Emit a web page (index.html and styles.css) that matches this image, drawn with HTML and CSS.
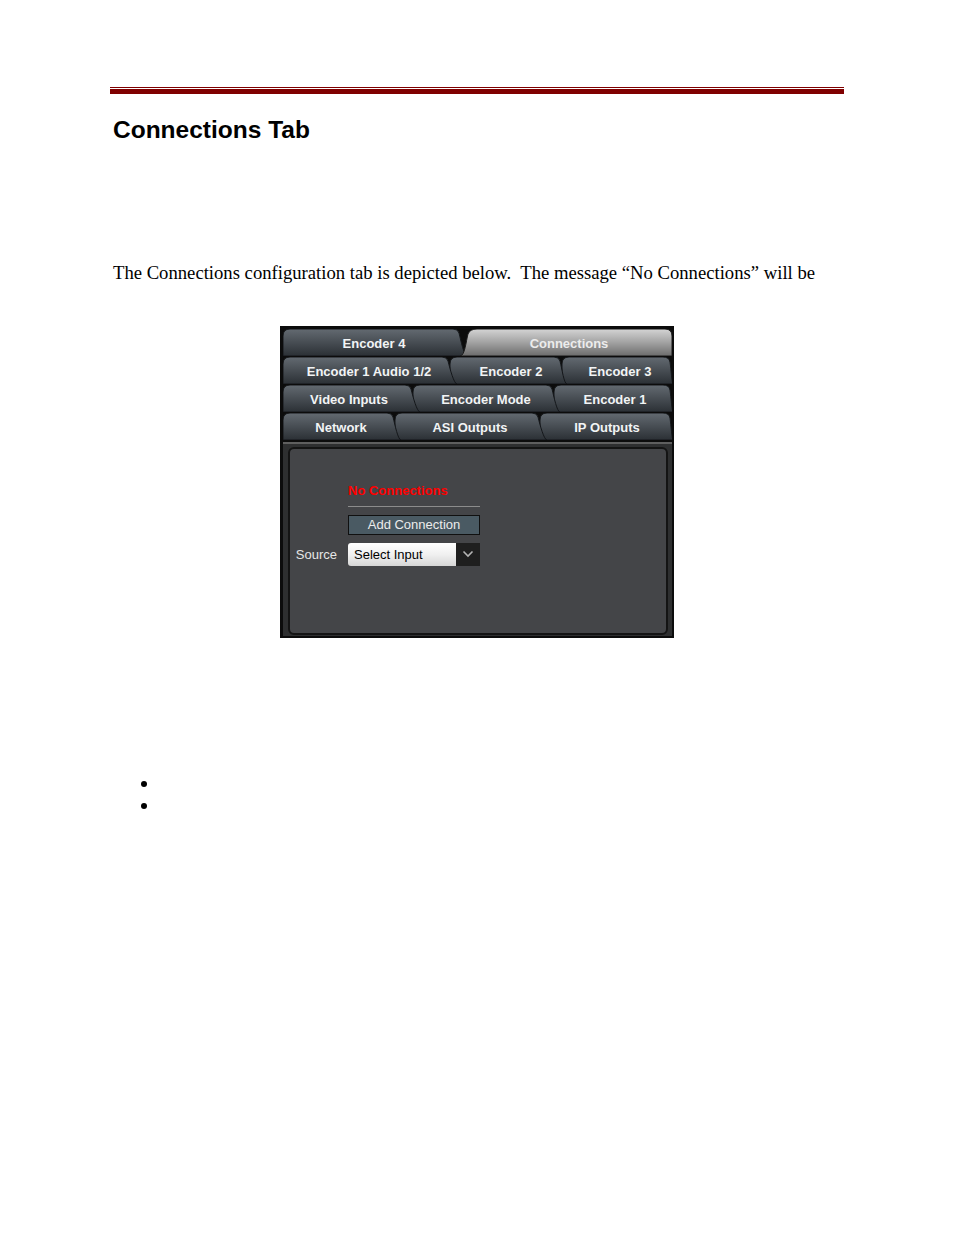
FILE: index.html
```html
<!DOCTYPE html>
<html>
<head>
<meta charset="utf-8">
<link rel="stylesheet" href="styles.css">
</head>
<body>
<div class="page">
  <div class="rule-thin"></div>
  <div class="rule-thick"></div>
  <h1 class="title">Connections Tab</h1>
  <p class="body-text">The Connections configuration tab is depicted below.&nbsp; The message “No Connections” will be</p>

  <div class="shot">
    <svg class="tabrow" width="389" height="27" viewBox="0 0 389 27">
      <defs>
        <linearGradient id="gTab" x1="0" y1="0" x2="0" y2="1">
          <stop offset="0" stop-color="#636a71"/>
          <stop offset="0.5" stop-color="#474d53"/>
          <stop offset="1" stop-color="#2b3035"/>
        </linearGradient>
        <linearGradient id="gActive" x1="0" y1="0" x2="0" y2="1">
          <stop offset="0" stop-color="#d4d4d4"/>
          <stop offset="0.5" stop-color="#a2a2a2"/>
          <stop offset="1" stop-color="#6c6c6c"/>
        </linearGradient>
      </defs>
      <path class="tab" d="M0,27 L0,7 Q0,0 7,0 L170,0 Q175,0 176,4 C178,12 181,27 184,27 Z"/>
      <path class="tab-active" d="M177,27 C182,27 183,12 185,5 Q187,0 194,0 L382,0 Q389,0 389,7 L389,27 Z"/>
      <text class="tab-label" x="91" y="18.5">Encoder 4</text>
      <text class="tab-label active" x="286" y="18.5">Connections</text>
    </svg>
    <svg class="tabrow" width="389" height="27" viewBox="0 0 389 27">
      <path class="tab" d="M279,27 L279,7 Q279,0 286,0 L380,0 Q386,0 387,5 C388,12 389,27 390,27 Z"/>
      <path class="tab" d="M167,27 L167,7 Q167,0 174,0 L271,0 Q276,0 277,4 C279,12 281,27 284,27 Z"/>
      <path class="tab" d="M0,27 L0,7 Q0,0 7,0 L159,0 Q164,0 165,4 C167,12 171,27 174,27 Z"/>
      <text class="tab-label" x="86" y="18.5">Encoder 1 Audio 1/2</text>
      <text class="tab-label" x="228" y="18.5">Encoder 2</text>
      <text class="tab-label" x="337" y="18.5">Encoder 3</text>
    </svg>
    <svg class="tabrow" width="389" height="27" viewBox="0 0 389 27">
      <path class="tab" d="M271,27 L271,7 Q271,0 278,0 L380,0 Q386,0 387,5 C388,12 389,27 390,27 Z"/>
      <path class="tab" d="M130,27 L130,7 Q130,0 137,0 L263,0 Q268,0 269,4 C271,12 274,27 277,27 Z"/>
      <path class="tab" d="M0,27 L0,7 Q0,0 7,0 L122,0 Q127,0 128,4 C130,12 134,27 137,27 Z"/>
      <text class="tab-label" x="66" y="18.5">Video Inputs</text>
      <text class="tab-label" x="203" y="18.5">Encoder Mode</text>
      <text class="tab-label" x="332" y="18.5">Encoder 1</text>
    </svg>
    <svg class="tabrow" width="389" height="27" viewBox="0 0 389 27">
      <path class="tab" d="M257,27 L257,7 Q257,0 264,0 L380,0 Q386,0 387,5 C388,12 389,27 390,27 Z"/>
      <path class="tab" d="M112,27 L112,7 Q112,0 119,0 L249,0 Q254,0 255,4 C257,12 261,27 264,27 Z"/>
      <path class="tab" d="M0,27 L0,7 Q0,0 7,0 L104,0 Q109,0 110,4 C112,12 115,27 118,27 Z"/>
      <text class="tab-label" x="58" y="18.5">Network</text>
      <text class="tab-label" x="187" y="18.5">ASI Outputs</text>
      <text class="tab-label" x="324" y="18.5">IP Outputs</text>
    </svg>

    <div class="content">
      <div class="panel">
        <div class="form">
          <div class="label"></div>
          <div class="status">No Connections</div>
          <div class="label"></div>
          <div class="add-btn">Add Connection</div>
          <div class="label source">Source</div>
          <div class="select">
            <span class="select-value">Select Input</span>
            <span class="select-arrow">
              <svg width="12" height="8" viewBox="0 0 12 8"><path d="M1.5,1.5 L6,6 L10.5,1.5" fill="none" stroke="#b4b4b4" stroke-width="1.6"/></svg>
            </span>
          </div>
        </div>
      </div>
    </div>
  </div>

  <ul class="bullets">
    <li>&nbsp;</li>
    <li>&nbsp;</li>
  </ul>
</div>
</body>
</html>
```

FILE: styles.css
```css
html, body {
  margin: 0;
  padding: 0;
  background: #ffffff;
}

.page {
  padding: 87px 0 0 110px;
  width: 734px;
}

.rule-thin {
  height: 1px;
  background: #800000;
}

.rule-thick {
  height: 5px;
  margin-top: 1px;
  background: #800000;
}

.title {
  margin: 22px 0 0 3px;
  font-family: "Liberation Sans", Arial, sans-serif;
  font-weight: bold;
  font-size: 24.5px;
  line-height: 28px;
  color: #000;
}

.body-text {
  margin: 118px 0 0 3px;
  font-family: "Liberation Serif", "Times New Roman", serif;
  font-size: 18.67px;
  line-height: 21.5px;
  color: #000;
  white-space: nowrap;
}

.shot {
  margin: 42px 0 0 170px;
  width: 394px;
  height: 312px;
  box-sizing: border-box;
  padding: 3px 2px 2px 3px;
  background: #0c0c0c;
  display: flex;
  flex-direction: column;
  gap: 1px;
}

.tabrow {
  display: block;
  flex: none;
  overflow: hidden;
}

.tab {
  fill: url(#gTab);
  stroke: #14171a;
  stroke-width: 1;
}

.tab-active {
  fill: url(#gActive);
  stroke: #1a1a1a;
  stroke-width: 1;
}

.tab-label {
  font-family: "Liberation Sans", Arial, sans-serif;
  font-weight: bold;
  font-size: 13px;
  fill: #f2f4f5;
  text-anchor: middle;
}

.tab-label.active {
  fill: #ececec;
}

.content {
  flex: 1;
  margin-top: 1px;
  border-top: 2px solid #5f5f5f;
  background: #2e2f30;
  padding: 3px 4px 1px 5px;
  display: flex;
}

.panel {
  flex: 1;
  border: 2px solid #141414;
  border-radius: 6px;
  background: #444548;
}

.form {
  display: grid;
  grid-template-columns: 58px 132px;
  padding-top: 34px;
  font-family: "Liberation Sans", Arial, sans-serif;
  font-size: 13px;
  line-height: 16px;
}

.label {
  color: #e6e6e6;
  text-align: right;
  padding-right: 11px;
}

.label.source {
  margin-top: 8px;
  line-height: 23px;
}

.status {
  color: #ff0000;
  font-weight: bold;
  padding-bottom: 7px;
  border-bottom: 1px solid #8c8c8c;
}

.add-btn {
  margin-top: 8px;
  height: 20px;
  box-sizing: border-box;
  border: 1px solid #101010;
  background: #4a5a63;
  color: #ececec;
  text-align: center;
  line-height: 18px;
}

.select {
  margin-top: 8px;
  height: 23px;
  display: flex;
}

.select-value {
  flex: 1;
  background: linear-gradient(#ffffff, #f0f0f0 50%, #d6d6d6);
  border-radius: 3px 0 0 3px;
  color: #000;
  padding-left: 6px;
  line-height: 23px;
}

.select-arrow {
  width: 24px;
  background: #1f1f1f;
  display: flex;
  align-items: center;
  justify-content: center;
}

.bullets {
  margin: 134px 0 0 0;
  padding-left: 49px;
  font-family: "Liberation Serif", "Times New Roman", serif;
  font-size: 18.67px;
  line-height: 22px;
  list-style: disc;
}
```
